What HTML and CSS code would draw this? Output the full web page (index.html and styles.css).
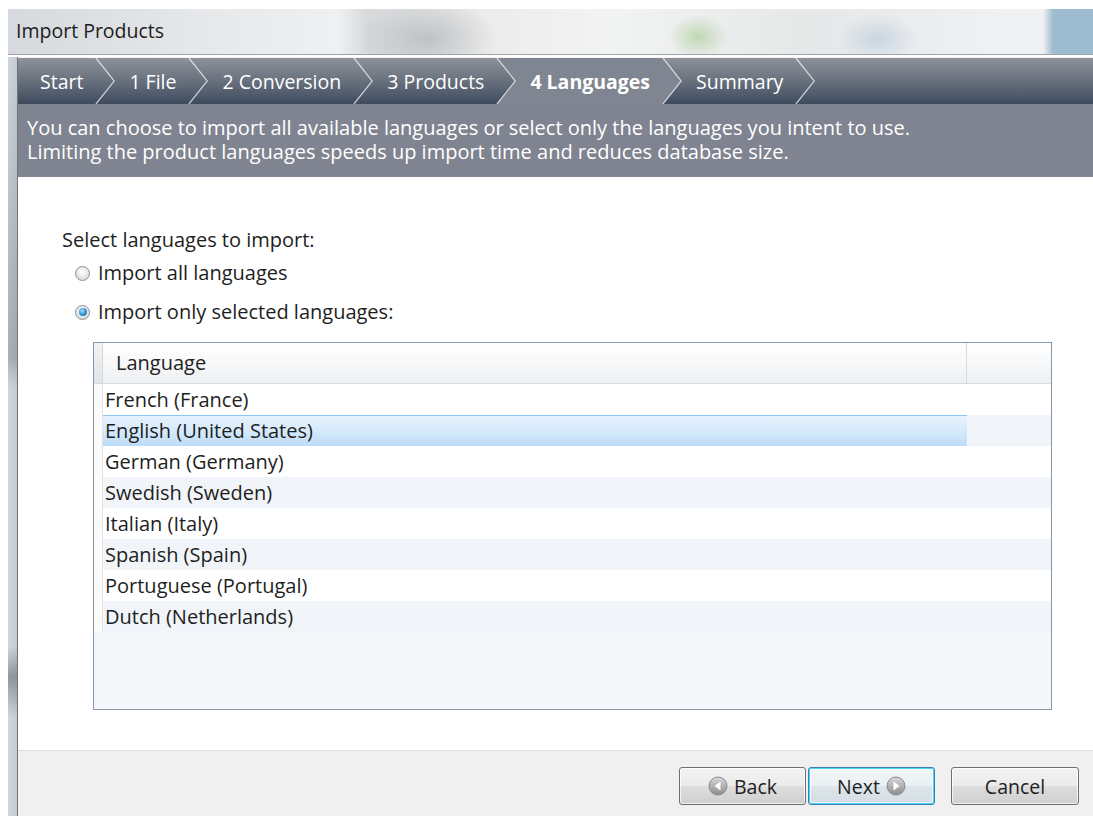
FILE: index.html
```html
<!DOCTYPE html>
<html lang="en">
<head>
<meta charset="utf-8">
<title>Import Products</title>
<link rel="stylesheet" href="styles.css">
</head>
<body>
<div class="window">
  <header class="titlebar">
    <span class="title">Import Products</span>
  </header>
  <div class="window-body">
    <div class="frame"></div>
    <div class="dialog">
      <nav class="steps">
        <span class="step first">Start</span>
        <svg class="sep" viewBox="0 0 24 47" preserveAspectRatio="none"><polyline points="1,0 21,23.5 1,47"/></svg>
        <span class="step">1 File</span>
        <svg class="sep" viewBox="0 0 24 47" preserveAspectRatio="none"><polyline points="1,0 21,23.5 1,47"/></svg>
        <span class="step">2 Conversion</span>
        <svg class="sep" viewBox="0 0 24 47" preserveAspectRatio="none"><polyline points="1,0 21,23.5 1,47"/></svg>
        <span class="step">3 Products</span>
        <svg class="sep" viewBox="0 0 24 47" preserveAspectRatio="none"><polygon class="fill" points="1,0 24,0 24,47 1,47 21,23.5"/><polyline points="1,0 21,23.5 1,47"/></svg>
        <span class="step active">4 Languages</span>
        <svg class="sep" viewBox="0 0 24 47" preserveAspectRatio="none"><polygon class="fill" points="0,0 1,0 21,23.5 1,47 0,47"/><polyline points="1,0 21,23.5 1,47"/></svg>
        <span class="step">Summary</span>
        <svg class="sep" viewBox="0 0 24 47" preserveAspectRatio="none"><polyline points="1,0 21,23.5 1,47"/></svg>
      </nav>
      <div class="desc">
        <p class="desc-line">You can choose to import all available languages or select only the languages you intent to use.</p>
        <p class="desc-line">Limiting the product languages speeds up import time and reduces database size.</p>
      </div>
      <main class="content">
        <p class="prompt">Select languages to import:</p>
        <label class="radio"><span class="bullet"></span>Import all languages</label>
        <label class="radio checked"><span class="bullet"></span>Import only selected languages:</label>
        <div class="grid">
          <div class="grid-head">
            <span class="gutter"></span>
            <span class="col">Language</span>
            <span class="filler"></span>
          </div>
          <div class="rows">
            <div class="row"><span class="gutter"></span><span class="cell">French (France)</span></div>
            <div class="row alt selected"><span class="gutter"></span><span class="cell">English (United States)</span></div>
            <div class="row"><span class="gutter"></span><span class="cell">German (Germany)</span></div>
            <div class="row alt"><span class="gutter"></span><span class="cell">Swedish (Sweden)</span></div>
            <div class="row"><span class="gutter"></span><span class="cell">Italian (Italy)</span></div>
            <div class="row alt"><span class="gutter"></span><span class="cell">Spanish (Spain)</span></div>
            <div class="row"><span class="gutter"></span><span class="cell">Portuguese (Portugal)</span></div>
            <div class="row alt"><span class="gutter"></span><span class="cell">Dutch (Netherlands)</span></div>
          </div>
        </div>
      </main>
      <footer class="footer">
        <button class="btn back">
          <svg class="nav-icon" viewBox="0 0 20 20"><defs><linearGradient id="ib" x1="0" y1="0" x2="0" y2="1"><stop offset="0" stop-color="#d9d9d9"/><stop offset="1" stop-color="#8c8c8c"/></linearGradient></defs><circle cx="10" cy="10" r="9" fill="url(#ib)" stroke="#8a8a8a"/><polygon points="12.5,5.5 12.5,14.5 6.5,10" fill="#fff"/></svg>
          Back
        </button>
        <button class="btn next">
          Next
          <svg class="nav-icon" viewBox="0 0 20 20"><defs><linearGradient id="in" x1="0" y1="0" x2="0" y2="1"><stop offset="0" stop-color="#d9d9d9"/><stop offset="1" stop-color="#8c8c8c"/></linearGradient></defs><circle cx="10" cy="10" r="9" fill="url(#in)" stroke="#8a8a8a"/><polygon points="7.5,5.5 7.5,14.5 13.5,10" fill="#fff"/></svg>
        </button>
        <button class="btn cancel">Cancel</button>
      </footer>
    </div>
  </div>
</div>
</body>
</html>
```
FILE: styles.css
```css
* {
  box-sizing: border-box;
}

html, body {
  margin: 0;
  padding: 0;
  background: #ffffff;
  width: 1093px;
  height: 816px;
  overflow: hidden;
}

body {
  font-family: "Open Sans", "Noto Sans", sans-serif;
  color: #1e1e1e;
}

.window {
  margin: 9px 0 0 8px;
  height: 807px;
  display: flex;
  flex-direction: column;
}

/* glass caption with the blurred desktop behind it */
.titlebar {
  height: 46px;
  display: flex;
  align-items: center;
  padding-left: 8px;
  background:
    radial-gradient(ellipse 70px 40px at 420px 30px, rgba(150,155,160,0.45), rgba(150,155,160,0) 100%),
    radial-gradient(ellipse 30px 22px at 690px 28px, rgba(140,190,110,0.45), rgba(140,190,110,0) 100%),
    radial-gradient(ellipse 40px 25px at 870px 30px, rgba(160,190,215,0.45), rgba(160,190,215,0) 100%),
    linear-gradient(90deg, rgba(0,0,0,0) 1035px, #9ebcd0 1045px),
    linear-gradient(90deg, #d6d9dd 0, #e6e8ea 200px, #eef0f1 330px, #d7d9db 360px, #ececec 480px, #f2f3f3 600px, #e6e7e8 800px, #f0f1f2 1000px);
  border-bottom: 1px solid #9ea3a8;
  box-shadow: 0 1px 0 #ffffff;
}

.title {
  font-size: 19.5px;
  color: #1c1c1c;
  margin-top: -3px;
}

.window-body {
  flex: 1;
  display: flex;
  margin-top: 2px;
}

.frame {
  width: 9px;
  background:
    linear-gradient(180deg, rgba(0,0,0,0) 0, rgba(90,100,110,0.35) 300px, rgba(0,0,0,0) 330px, rgba(0,0,0,0) 590px, rgba(70,75,80,0.45) 620px, rgba(0,0,0,0) 660px),
    linear-gradient(90deg, #d3d7dc, #c5cad0);
}

.dialog {
  flex: 1;
  display: flex;
  flex-direction: column;
  border-left: 1px solid #6f757c;
  background: #ffffff;
}

/* wizard breadcrumb */
.steps {
  height: 47px;
  display: flex;
  align-items: stretch;
  background: linear-gradient(180deg, #8d929b 0%, #6c7480 45%, #3e4b5e 100%);
  border-top: 1px solid #f4f4f4;
}

.step {
  display: flex;
  align-items: center;
  padding: 0 12px;
  color: #ffffff;
  font-size: 19.5px;
  white-space: nowrap;
}

.step.first {
  padding-left: 22px;
}

.step.active {
  background: #7f8591;
  font-weight: 700;
}

.sep {
  width: 22px;
  height: 46px;
  flex: none;
  overflow: visible;
}

.sep polyline {
  fill: none;
  stroke: rgba(255,255,255,0.72);
  stroke-width: 1.2;
}

.sep .fill {
  fill: #7f8591;
}

.desc {
  height: 73px;
  padding: 12px 10px 0 9px;
  background: #7f8490;
  color: #ffffff;
  font-size: 20px;
  white-space: nowrap;
  display: flex;
  flex-direction: column;
}

.desc-line {
  margin: 0;
  height: 24px;
  line-height: 24px;
}

/* page body */
.content {
  flex: 1;
  display: flex;
  flex-direction: column;
  padding: 51px 41px 0 44px;
  font-size: 20px;
  line-height: 24px;
}

.prompt {
  margin: 0;
}

.radio {
  display: flex;
  align-items: center;
  padding-left: 13px;
  margin-top: 9px;
}

.radio + .radio {
  margin-top: 15px;
}

.bullet {
  width: 15px;
  height: 15px;
  border-radius: 50%;
  margin-right: 8px;
  border: 1px solid #8e9092;
  background: radial-gradient(circle at 50% 40%, #ffffff 0, #e8e9ea 50%, #c6c8ca 100%);
  display: flex;
  align-items: center;
  justify-content: center;
}

.radio.checked .bullet::after {
  content: "";
  width: 8px;
  height: 8px;
  border-radius: 50%;
  background: radial-gradient(circle at 40% 35%, #9fe0ff 0, #2d8fd0 55%, #0d5a9a 100%);
}

/* language grid */
.grid {
  margin: 18px 0 0 31px;
  height: 368px;
  border: 1px solid #8498ad;
  background: #f4f6f9;
  display: flex;
  flex-direction: column;
}

.grid-head {
  height: 41px;
  display: flex;
  background: linear-gradient(180deg, #ffffff 0%, #f7f8f9 50%, #eeeff1 100%);
  border-bottom: 1px solid #d9dadc;
}

.grid-head .gutter {
  width: 9px;
  background: linear-gradient(180deg, #f2f3f4, #e2e3e5);
  border-right: 1px solid #d6d7d9;
}

.col {
  width: 864px;
  display: flex;
  align-items: center;
  padding-left: 13px;
  border-right: 1px solid #d9dadc;
  color: #222;
}

.filler {
  flex: 1;
}

.row {
  height: 31px;
  display: flex;
  background: #ffffff;
}

.row.alt {
  background: #f1f4f8;
}

.row .gutter {
  width: 9px;
  border-right: 1px solid #e2e3e5;
  background: #fbfbfc;
}

.cell {
  width: 864px;
  display: flex;
  align-items: center;
  padding-left: 2px;
  white-space: nowrap;
}

.row.selected .cell {
  background: linear-gradient(180deg, #e6f2fd 0%, #d6eafc 50%, #bcdcf8 100%);
  border-top: 1px solid #8ec7f2;
}

/* dialog buttons */
.footer {
  height: 66px;
  flex: none;
  display: flex;
  justify-content: flex-end;
  align-items: flex-start;
  padding: 16px 14px 0 0;
  background: #f0f0f0;
  border-top: 1px solid #dedede;
}

.btn {
  height: 38px;
  width: 127px;
  display: flex;
  align-items: center;
  justify-content: center;
  gap: 6px;
  font-family: "Open Sans", "Noto Sans", sans-serif;
  font-size: 19.5px;
  color: #1e1e1e;
  border: 1px solid #707070;
  border-radius: 3px;
  background: linear-gradient(180deg, #f3f3f3 0%, #ebebeb 48%, #dddddd 52%, #cfcfcf 100%);
  box-shadow: inset 0 0 0 1px rgba(255,255,255,0.7);
  padding: 0;
}

.btn.next {
  margin-left: 2px;
  border-color: #3c7fb1;
  box-shadow: inset 0 0 0 1px #48d7fb, inset 0 0 0 2px rgba(255,255,255,0.6);
  background: linear-gradient(180deg, #f2f6f8 0%, #eaf0f3 48%, #dde5ea 52%, #d3dde3 100%);
}

.btn.cancel {
  margin-left: 16px;
  width: 128px;
}

.nav-icon {
  width: 20px;
  height: 20px;
}
```
